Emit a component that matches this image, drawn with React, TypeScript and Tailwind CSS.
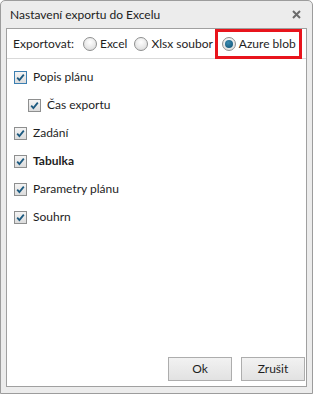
import React from "react";

const FONT = { fontFamily: 'Lato, "Noto Sans", sans-serif' };

const Radio = ({ checked }: { checked?: boolean }) => (
  <span className="w-[14px] h-[14px] rounded-full border border-[#8e8f8f] bg-[radial-gradient(circle_at_50%_35%,#ffffff,#d6d6d6)] flex items-center justify-center flex-shrink-0">
    {checked && (
      <span className="w-[8px] h-[8px] rounded-full bg-[radial-gradient(circle_at_40%_35%,#3b8ab0,#0d4f72)]" />
    )}
  </span>
);

const Check = ({ focused }: { focused?: boolean }) => (
  <span
    className={`w-[13px] h-[13px] border flex items-center justify-center flex-shrink-0 bg-gradient-to-b from-[#f4f4f4] to-[#dcdcdc] ${
      focused ? "border-[#3c7fb1]" : "border-[#8e8f8f]"
    }`}
  >
    <svg width="9" height="9" viewBox="0 0 9 9">
      <path d="M1.2 4.6 L3.4 7 L7.8 1.6" fill="none" stroke="#1c5a80" strokeWidth="1.8" />
    </svg>
  </span>
);

const ITEMS = [
  { label: "Popis plánu", indent: false, bold: false, focused: true },
  { label: "Čas exportu", indent: true, bold: false },
  { label: "Zadání", indent: false, bold: false },
  { label: "Tabulka", indent: false, bold: true },
  { label: "Parametry plánu", indent: false, bold: false },
  { label: "Souhrn", indent: false, bold: false },
];

export default function App() {
  return (
    <div className="w-[314px] h-[395px] bg-white" style={FONT}>
      <div className="w-[313px] h-[394px] border border-[#9c9c9c] rounded-t-[5px] bg-[#ececec] flex flex-col text-[12px] text-[#1e1e1e] whitespace-nowrap">
        <div className="h-[27px] flex items-center justify-between pl-[9px] pr-[11px]">
          <span className="text-[#222]">Nastavení exportu do Excelu</span>
          <svg width="9" height="9" viewBox="0 0 9 9">
            <path d="M1 1 L8 8 M8 1 L1 8" stroke="#6b6b6b" strokeWidth="2" />
          </svg>
        </div>
        <div className="flex-1 mx-[5px] mb-[6px] border border-[#a0a0a0] bg-white flex flex-col">
          <div className="h-[30px] border-b border-[#d9d9d9] flex items-center pl-[6px]">
            <span>Exportovat:</span>
            <span className="flex items-center gap-[3px] ml-[9px]">
              <Radio />
              <span>Excel</span>
            </span>
            <span className="flex items-center gap-[3px] ml-[7px]">
              <Radio />
              <span>Xlsx soubor</span>
            </span>
            <span className="flex items-center gap-[3px] ml-[9px] relative">
              <Radio checked />
              <span>Azure blob</span>
              <span className="absolute -left-[7px] -right-[6px] -top-[6px] -bottom-[6px] border-[3px] border-[#e8141c]" />
            </span>
          </div>
          <div className="flex flex-col pt-[4px] pl-[7px]">
            {ITEMS.map((it) => (
              <div
                key={it.label}
                className={`h-[28px] flex items-center gap-[6px] ${it.indent ? "pl-[14px]" : ""}`}
              >
                <Check focused={it.focused} />
                <span className={it.bold ? "font-bold" : ""}>{it.label}</span>
              </div>
            ))}
          </div>
          <div className="flex-1" />
          <div className="flex justify-end gap-[9px] pr-[1px] pb-[5px]">
            <button className="w-[64px] h-[24px] border border-[#adadad] bg-gradient-to-b from-[#f2f2f2] to-[#e2e2e2]">
              Ok
            </button>
            <button className="w-[64px] h-[24px] border border-[#adadad] bg-gradient-to-b from-[#f2f2f2] to-[#e2e2e2]">
              Zrušit
            </button>
          </div>
        </div>
      </div>
    </div>
  );
}
